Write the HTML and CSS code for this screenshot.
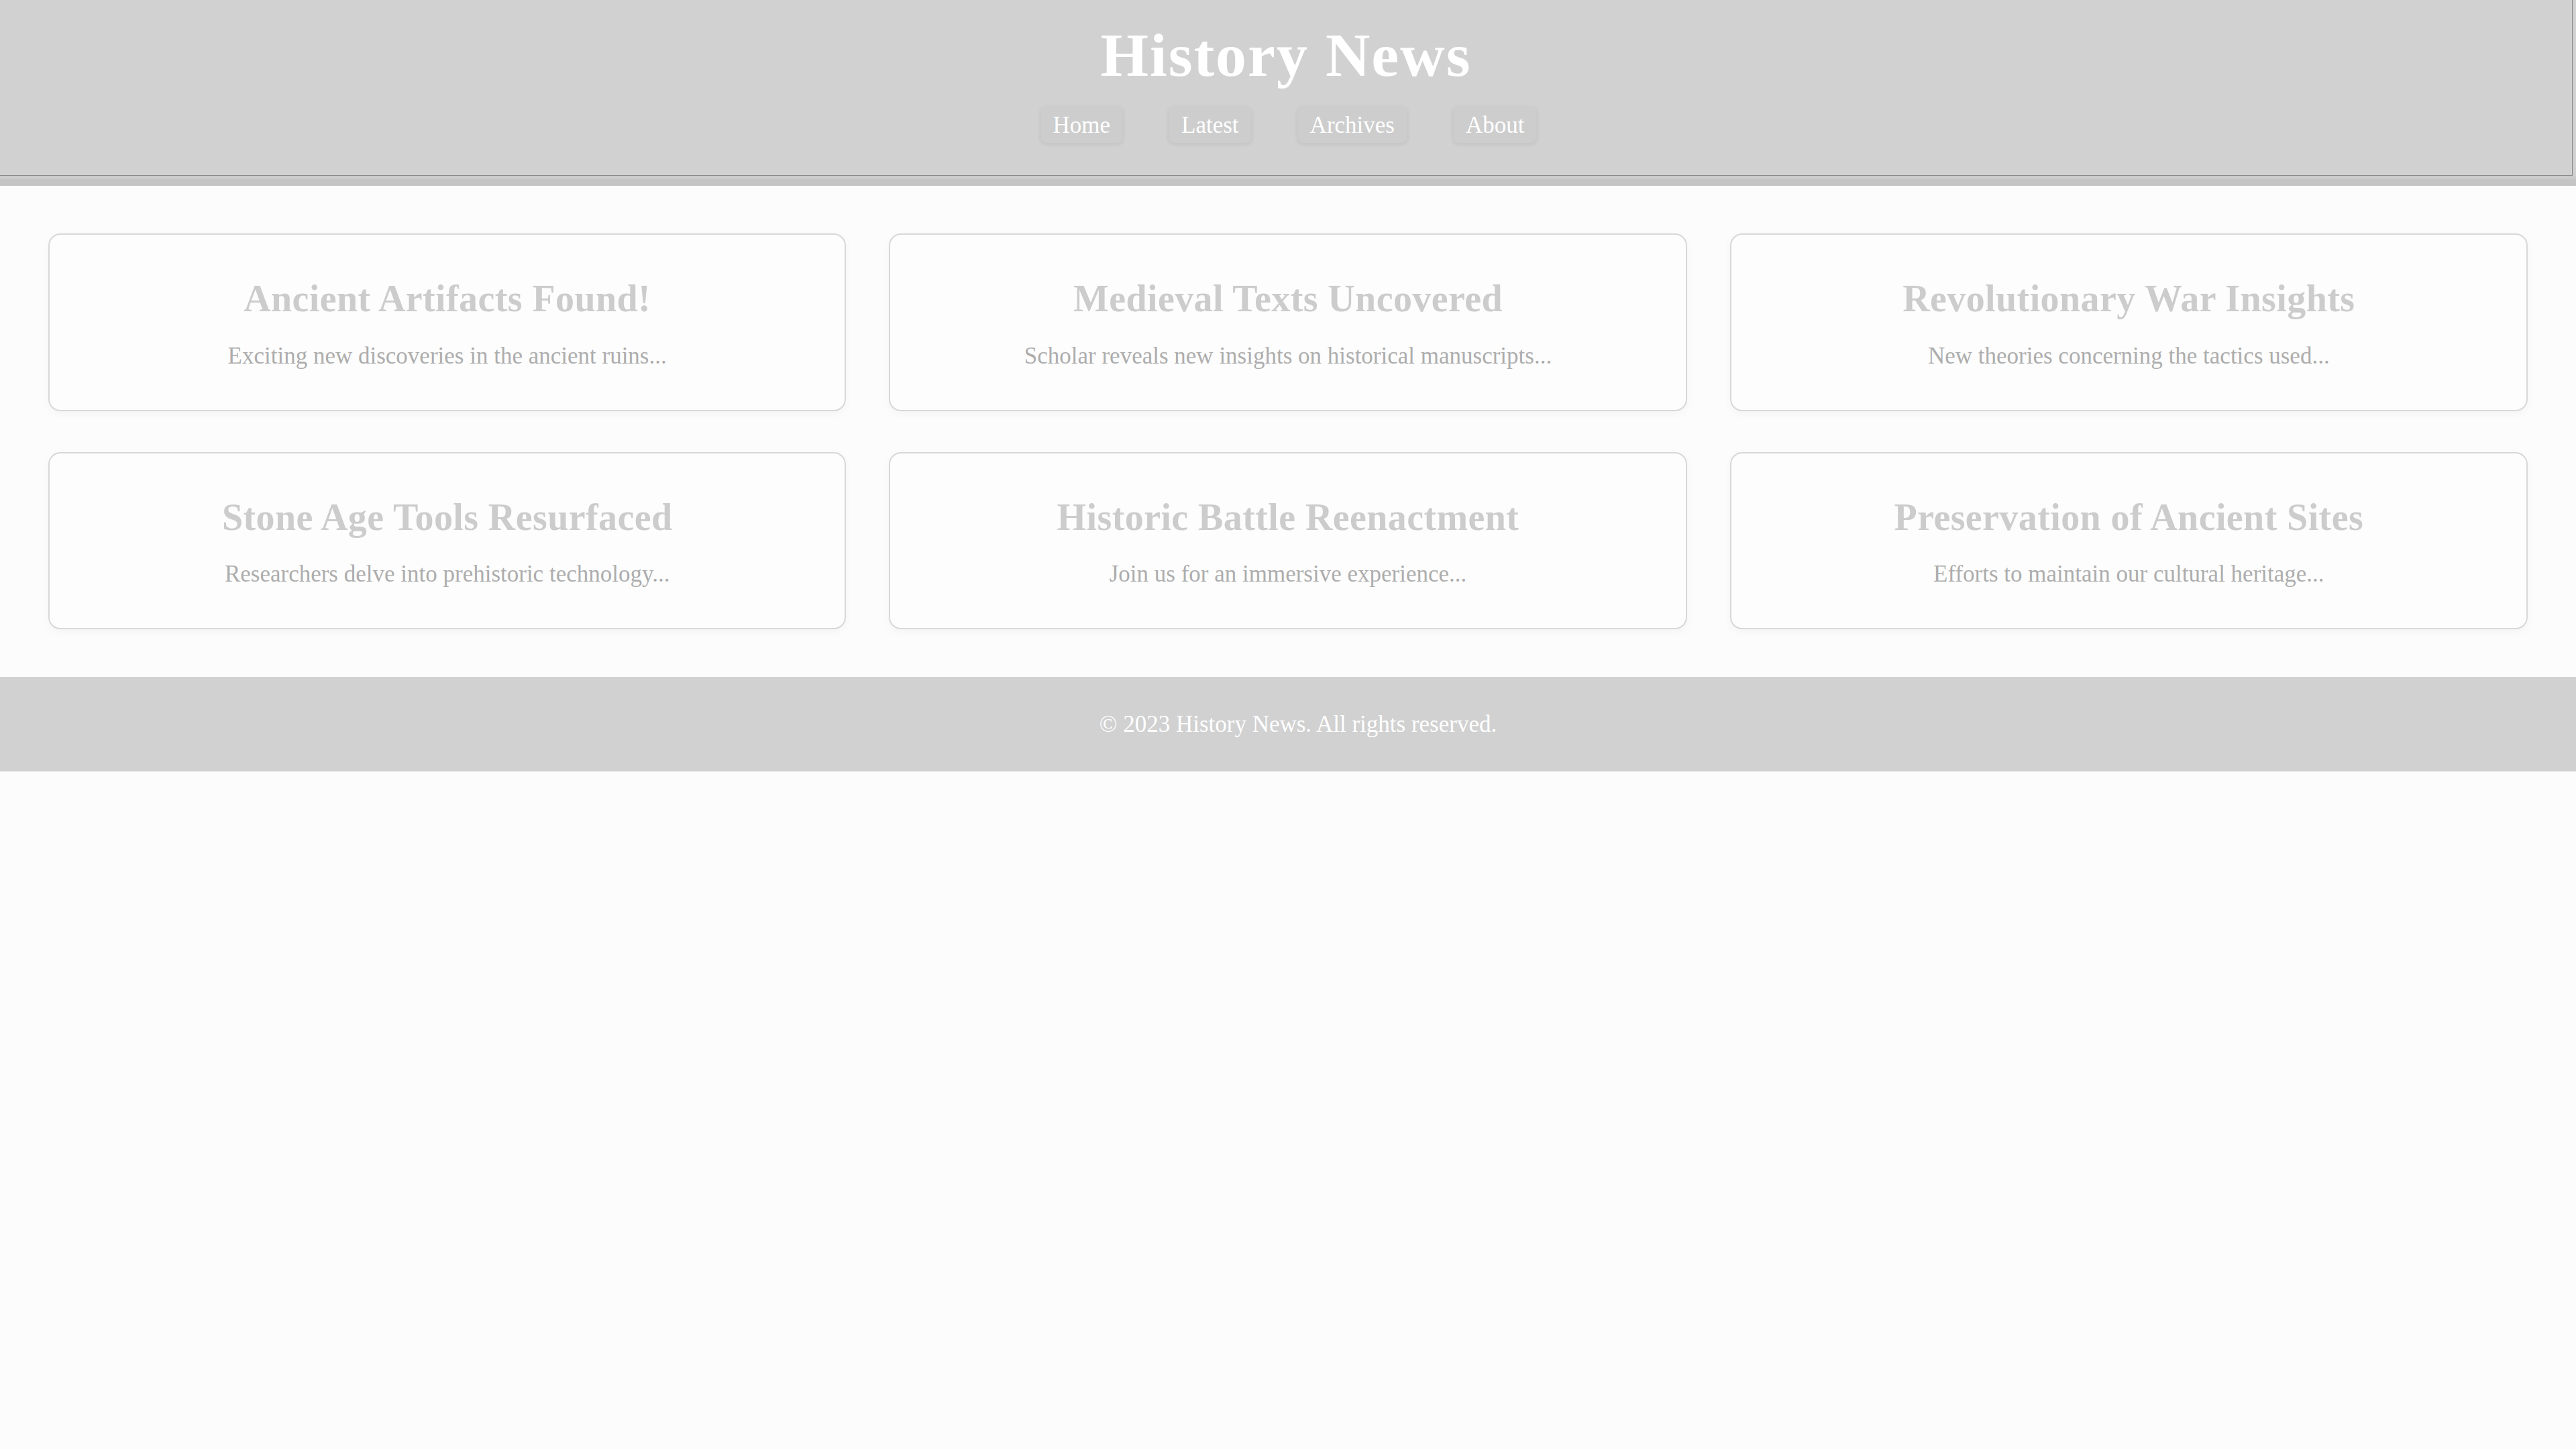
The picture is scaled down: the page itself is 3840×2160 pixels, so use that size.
FILE: index.html
```html
<!DOCTYPE html>
<html lang="en">
<head>
<meta charset="utf-8">
<title>History News</title>
<link rel="stylesheet" href="styles.css">
</head>
<body>
<header class="site-header">
  <div class="masthead">
    <h1 class="site-title">History News</h1>
    <nav class="nav">
      <a class="nav-link" href="#">Home</a>
      <a class="nav-link" href="#">Latest</a>
      <a class="nav-link" href="#">Archives</a>
      <a class="nav-link" href="#">About</a>
    </nav>
  </div>
</header>
<main class="articles">
  <article class="card">
    <h2 class="card-title">Ancient Artifacts Found!</h2>
    <p class="card-text">Exciting new discoveries in the ancient ruins...</p>
  </article>
  <article class="card">
    <h2 class="card-title">Medieval Texts Uncovered</h2>
    <p class="card-text">Scholar reveals new insights on historical manuscripts...</p>
  </article>
  <article class="card">
    <h2 class="card-title">Revolutionary War Insights</h2>
    <p class="card-text">New theories concerning the tactics used...</p>
  </article>
  <article class="card">
    <h2 class="card-title">Stone Age Tools Resurfaced</h2>
    <p class="card-text">Researchers delve into prehistoric technology...</p>
  </article>
  <article class="card">
    <h2 class="card-title">Historic Battle Reenactment</h2>
    <p class="card-text">Join us for an immersive experience...</p>
  </article>
  <article class="card">
    <h2 class="card-title">Preservation of Ancient Sites</h2>
    <p class="card-text">Efforts to maintain our cultural heritage...</p>
  </article>
</main>
<footer class="site-footer">
  <p class="footer-text">© 2023 History News. All rights reserved.</p>
</footer>
</body>
</html>
```

FILE: styles.css
```css
html, body {
  margin: 0;
  padding: 0;
}

body {
  background: #fcfcfc;
  font-family: "Liberation Serif", "Times New Roman", serif;
  color: #aaaaaa;
}

.site-header {
  background: #d1d1d1;
  border-bottom: 10px solid #c4c4c4;
}

.site-header::after {
  content: "";
  display: block;
  height: 5px;
  background: #cbcbcb;
}

.masthead {
  margin-right: 5px;
  padding: 27px 0 48px;
  border-right: 1px solid #878787;
  border-bottom: 1px solid #878787;
  display: flex;
  flex-direction: column;
  align-items: center;
}

.site-title {
  margin: 0;
  font-size: 92px;
  line-height: 1.2;
  font-weight: 700;
  letter-spacing: 2px;
  color: #ffffff;
}

.nav {
  margin-top: 24px;
  margin-left: 8px;
  display: flex;
  gap: 70px;
}

.nav-link {
  display: block;
  padding: 5px 18px;
  font-size: 35px;
  line-height: 1.2;
  color: #ffffff;
  text-decoration: none;
  background: #cdcdcd;
  border-radius: 8px;
  box-shadow: 0 0 0 5px rgba(0, 0, 0, 0.012), 0 2px 6px rgba(0, 0, 0, 0.05);
}

.articles {
  padding: 71px 72px;
  display: grid;
  grid-template-columns: repeat(3, 1fr);
  gap: 61px 64px;
}

.card {
  background: #fdfdfd;
  border: 2px solid #d8d8d8;
  border-radius: 18px;
  box-shadow: 0 4px 14px rgba(0, 0, 0, 0.035);
  padding: 62px 24px 59px;
  text-align: center;
}

.card-title {
  margin: 0;
  font-size: 56px;
  line-height: 1.2;
  font-weight: 700;
  letter-spacing: 0.4px;
  color: #cccccc;
}

.card-text {
  margin: 30px 0 0;
  font-size: 35px;
  line-height: 1.2;
  color: #adadad;
}

.site-footer {
  background: #d1d1d1;
  padding: 50px 0 49px 30px;
  text-align: center;
}

.footer-text {
  margin: 0;
  font-size: 35px;
  line-height: 1.2;
  color: #ffffff;
}
```
